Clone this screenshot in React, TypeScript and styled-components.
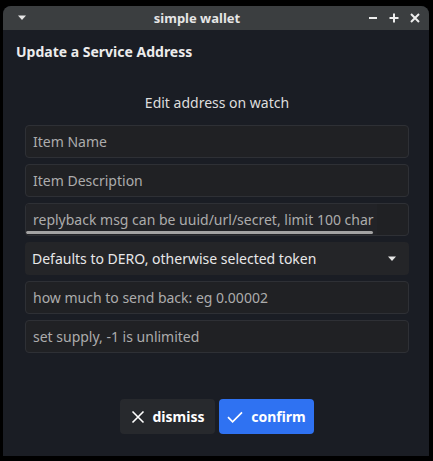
import styled, { createGlobalStyle } from "styled-components";

const GlobalStyle = createGlobalStyle`
    html, body {
        margin: 0;
        padding: 0;
        background: #000;
    }
    body {
        font-family: "Noto Sans", "DejaVu Sans", sans-serif;
    }
`;

const Screen = styled.div`
    width: 433px;
    height: 461px;
    padding: 6px 4px 5px 3px;
    box-sizing: border-box;
    background: #000;
`;

const Window = styled.div`
    height: 100%;
    display: flex;
    flex-direction: column;
    background: #1a1d24;
    border-radius: 8px 8px 0 0;
    overflow: hidden;
`;

const TitleBar = styled.div`
    height: 24px;
    flex: none;
    display: flex;
    align-items: center;
    background: #3b3e40;
    color: #e6e6e6;
    padding: 0 4px 0 8px;
`;

const TitleText = styled.div`
    flex: 1;
    text-align: center;
    font-size: 13px;
    font-weight: 700;
`;

const BarButton = styled.span`
    width: 21px;
    height: 24px;
    display: flex;
    align-items: center;
    justify-content: center;
`;

const Body = styled.div`
    flex: 1;
    display: flex;
    flex-direction: column;
    padding: 12px 20px 0 22px;
`;

const Heading = styled.div`
    margin-left: -9px;
    font-size: 14px;
    line-height: 20px;
    font-weight: 700;
    color: #ececec;
`;

const SubHeading = styled.div`
    margin-top: 31px;
    text-align: center;
    font-size: 14px;
    line-height: 20px;
    color: #dedede;
`;

const Form = styled.div`
    margin-top: 12px;
    display: flex;
    flex-direction: column;
    gap: 6px;
`;

const Field = styled.div`
    height: 33px;
    box-sizing: border-box;
    border: 1px solid #2e3035;
    border-radius: 4px;
    background: #202124;
    display: flex;
    align-items: center;
    position: relative;
    overflow: hidden;
`;

const Placeholder = styled.span<{ $bright?: boolean }>`
    padding-left: 7px;
    font-size: 14px;
    color: ${(p) => (p.$bright ? "#e8e8e8" : "#acacac")};
    white-space: nowrap;
`;

const ScrollView = styled.div`
    width: 351px;
    height: 100%;
    display: flex;
    align-items: center;
    background: #222327;
    overflow: hidden;
`;

const ScrollBar = styled.div`
    position: absolute;
    left: 0;
    bottom: 1px;
    width: 347px;
    height: 3px;
    border-radius: 2px;
    background: #a3a3a3;
`;

const Select = styled.div`
    height: 33px;
    border-radius: 4px;
    background: #242528;
    display: flex;
    align-items: center;
    justify-content: space-between;
    padding-right: 12px;
`;

const Actions = styled.div`
    margin-top: auto;
    margin-bottom: 22px;
    display: flex;
    justify-content: center;
    gap: 4px;
`;

const Button = styled.button<{ $primary?: boolean }>`
    width: 95px;
    height: 35px;
    border: none;
    border-radius: 4px;
    background: ${(p) => (p.$primary ? "#2f72f2" : "#27292d")};
    color: #fff;
    font-family: inherit;
    font-size: 14px;
    font-weight: 700;
    display: flex;
    align-items: center;
    justify-content: center;
    gap: 8px;
    padding: 0;
`;

const Caret = ({ color = "#e6e6e6" }: { color?: string }) => (
    <svg width="10" height="6" viewBox="0 0 10 6">
        <path d="M1 0.5h8L5 5z" fill={color} />
    </svg>
);

const App = () => {
    return (
        <Screen>
            <GlobalStyle />
            <Window>
                <TitleBar>
                    <BarButton>
                        <Caret />
                    </BarButton>
                    <TitleText>simple wallet</TitleText>
                    <BarButton>
                        <svg width="10" height="10" viewBox="0 0 10 10">
                            <path d="M1 5h8" stroke="#eee" strokeWidth="2" />
                        </svg>
                    </BarButton>
                    <BarButton>
                        <svg width="10" height="10" viewBox="0 0 10 10">
                            <path d="M0.5 5h9M5 0.5v9" stroke="#eee" strokeWidth="2" />
                        </svg>
                    </BarButton>
                    <BarButton>
                        <svg width="10" height="10" viewBox="0 0 10 10">
                            <path d="M1 1l8 8M9 1L1 9" stroke="#eee" strokeWidth="2" />
                        </svg>
                    </BarButton>
                </TitleBar>
                <Body>
                    <Heading>Update a Service Address</Heading>
                    <SubHeading>Edit address on watch</SubHeading>
                    <Form>
                        <Field>
                            <Placeholder>Item Name</Placeholder>
                        </Field>
                        <Field>
                            <Placeholder>Item Description</Placeholder>
                        </Field>
                        <Field>
                            <ScrollView>
                                <Placeholder>replyback msg can be uuid/url/secret, limit 100 char</Placeholder>
                            </ScrollView>
                            <ScrollBar />
                        </Field>
                        <Select>
                            <Placeholder $bright>Defaults to DERO, otherwise selected token</Placeholder>
                            <Caret />
                        </Select>
                        <Field>
                            <Placeholder>how much to send back: eg 0.00002</Placeholder>
                        </Field>
                        <Field>
                            <Placeholder>set supply, -1 is unlimited</Placeholder>
                        </Field>
                    </Form>
                    <Actions>
                        <Button>
                            <svg width="14" height="14" viewBox="0 0 14 14">
                                <path d="M1.5 1.5l11 11M12.5 1.5l-11 11" stroke="#fff" strokeWidth="1.6" />
                            </svg>
                            dismiss
                        </Button>
                        <Button $primary>
                            <svg width="16" height="12" viewBox="0 0 16 12">
                                <path d="M1 6.2l4.6 4.6L15 1.4" stroke="#fff" strokeWidth="1.7" fill="none" />
                            </svg>
                            confirm
                        </Button>
                    </Actions>
                </Body>
            </Window>
        </Screen>
    );
};

export default App;
